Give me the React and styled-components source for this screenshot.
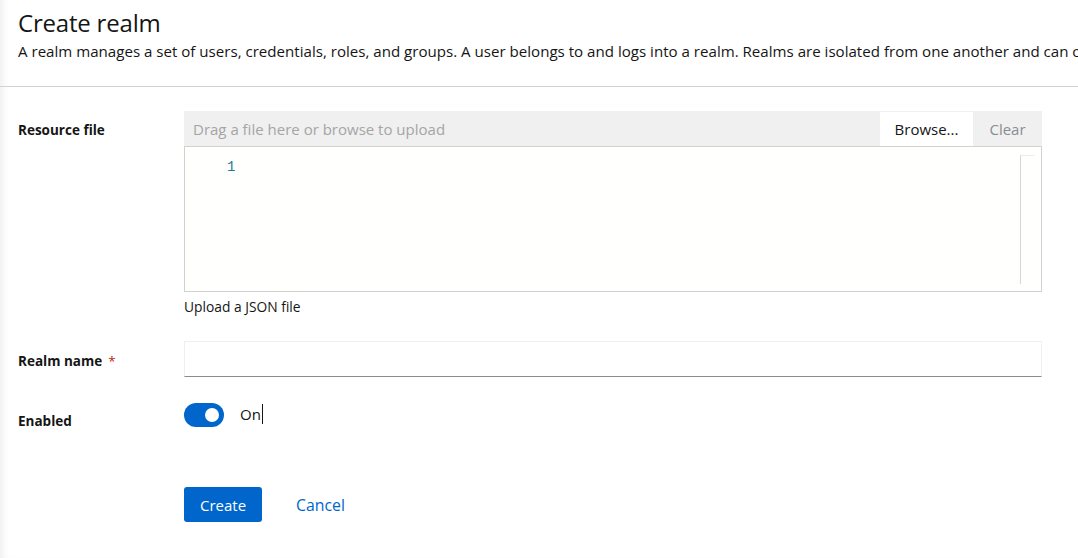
import React from 'react';
import styled, { createGlobalStyle } from 'styled-components';

const GlobalStyle = createGlobalStyle`
  html, body {
    margin: 0;
    padding: 0;
    background: #fff;
  }
  body {
    font-family: 'Open Sans', 'Noto Sans', sans-serif;
    color: #151515;
  }
`;

const Page = styled.div`
  width: 1078px;
  height: 558px;
  overflow: hidden;
  background: #fff;
  box-shadow: inset 8px 0 8px -6px rgba(0, 0, 0, 0.08);
`;

const Header = styled.header`
  padding: 8px 18px 0;
  height: 78px;
  border-bottom: 1px solid #d2d2d2;
  white-space: nowrap;
  overflow: hidden;
`;

const Title = styled.h1`
  margin: 0;
  font-size: 24px;
  font-weight: 400;
  line-height: 30px;
  letter-spacing: -0.2px;
`;

const Description = styled.p`
  margin: 2px 0 0;
  font-size: 15.1px;
  line-height: 22px;
  letter-spacing: 0;
`;

const Form = styled.form`
  display: grid;
  grid-template-columns: 166px 858px;
  row-gap: 24px;
  padding: 24px 0 0 18px;
`;

const Label = styled.label`
  font-size: 13.5px;
  font-weight: 700;
  line-height: 20px;
  padding-top: ${p => p.top || 8}px;
  display: flex;
  gap: 6px;
`;

const Required = styled.span`
  color: #c9190b;
  font-weight: 400;
`;

const Control = styled.div`
  display: flex;
  flex-direction: column;
`;

const UploadBar = styled.div`
  display: flex;
  height: 35px;
  background: #f0f0f0;
`;

const FileName = styled.div`
  flex: 1;
  padding: 0 9px;
  display: flex;
  align-items: center;
  color: #a5a5a5;
  font-size: 15px;
`;

const BarButton = styled.button`
  border: 0;
  background: ${p => (p.white ? '#fff' : 'transparent')};
  color: ${p => (p.white ? '#151515' : '#8a8d90')};
  font-family: inherit;
  font-size: 15px;
  width: ${p => p.w}px;
  padding: 0;
  margin-top: 1px;
`;

const Editor = styled.div`
  position: relative;
  height: 144px;
  border: 1px solid #d2d2d2;
  background: #fffffd;
`;

const LineNumber = styled.span`
  display: block;
  margin: 10px 0 0 42px;
  font-family: 'Liberation Mono', 'DejaVu Sans Mono', monospace;
  font-size: 14px;
  line-height: 20px;
  color: #237893;
`;

const Ruler = styled.div`
  position: absolute;
  top: 8px;
  right: 7px;
  width: 13px;
  height: 128px;
  border-left: 1px solid #d6d6d6;
  border-top: 1px solid #ececec;
`;

const Helper = styled.div`
  font-size: 13.8px;
  line-height: 18px;
  margin-top: 6px;
`;

const TextInput = styled.input`
  height: 36px;
  margin-top: 1px;
  box-sizing: border-box;
  border: 1px solid #f0f0f0;
  border-bottom-color: #8a8d90;
  background: #fff;
  outline: none;
`;

const SwitchRow = styled.div`
  display: flex;
  align-items: center;
  gap: 16px;
  height: 24px;
  margin-top: 2px;
`;

const Track = styled.span`
  width: 40px;
  height: 24px;
  border-radius: 12px;
  background: #06c;
  display: flex;
  align-items: center;
  justify-content: flex-end;
  padding-right: 5px;
  box-sizing: border-box;
`;

const Knob = styled.span`
  width: 14px;
  height: 14px;
  border-radius: 50%;
  background: #fff;
`;

const SwitchText = styled.span`
  font-size: 15px;
  display: flex;
  align-items: center;
  margin-top: -3px;
`;

const Caret = styled.span`
  display: inline-block;
  width: 1px;
  height: 20px;
  background: #151515;
  margin-left: 1px;
`;

const Actions = styled.div`
  grid-column: 2;
  display: flex;
  margin-top: 32px;
`;

const Button = styled.button`
  font-family: inherit;
  font-size: ${p => (p.link ? 15.8 : 15)}px;
  height: 35px;
  border: 0;
  border-radius: 3px;
  padding: 0 16px;
  background: ${p => (p.link ? 'transparent' : '#06c')};
  color: ${p => (p.link ? '#06c' : '#fff')};
  margin-left: ${p => (p.link ? 18 : 0)}px;
`;

export default function App() {
  return (
    <Page>
      <GlobalStyle />
      <Header>
        <Title>Create realm</Title>
        <Description>
          A realm manages a set of users, credentials, roles, and groups. A user belongs to and logs into a realm. Realms are isolated from one another and can only manage and authenticate the users that they control.
        </Description>
      </Header>
      <Form>
        <Label top={9}>Resource file</Label>
        <Control>
          <UploadBar>
            <FileName>Drag a file here or browse to upload</FileName>
            <BarButton type="button" white w={93}>Browse...</BarButton>
            <BarButton type="button" w={69}>Clear</BarButton>
          </UploadBar>
          <Editor>
            <LineNumber>1</LineNumber>
            <Ruler />
          </Editor>
          <Helper>Upload a JSON file</Helper>
        </Control>

        <Label top={11}>
          Realm name <Required>*</Required>
        </Label>
        <TextInput type="text" />

        <Label top={10}>Enabled</Label>
        <SwitchRow>
          <Track><Knob /></Track>
          <SwitchText>On<Caret /></SwitchText>
        </SwitchRow>

        <Actions>
          <Button type="button">Create</Button>
          <Button type="button" link>Cancel</Button>
        </Actions>
      </Form>
    </Page>
  );
}
